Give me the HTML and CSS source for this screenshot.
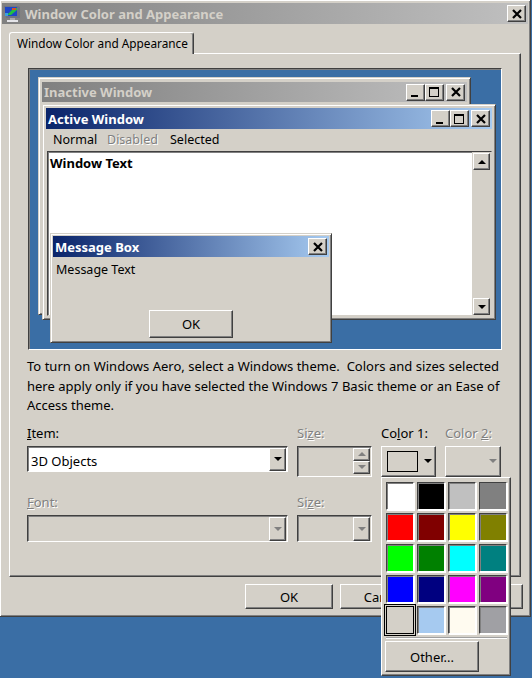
FILE: index.html
```html
<!DOCTYPE html>
<html lang="en">

<head>
    <meta charset="UTF-8">
    <meta name="viewport" content="width=device-width, initial-scale=1.0">
    <title>Window Color and Appearance</title>
    <link rel="stylesheet" href="styles.css">
</head>

<body>
    <div class="dialog">
        <div class="dialog-title">
            <svg class="app-icon" width="16" height="18" viewBox="0 0 16 18">
                <path d="M0 1l14 0 2 1 0 11-14 0z" fill="#6f7484" />
                <path d="M1 2h12v9H1z" fill="#1d46c8" />
                <path d="M3 10l7-7 3 0 0 2-6 5z" fill="#22c040" />
                <path d="M8 3h4v2H8z" fill="#d0502c" />
                <path d="M1 8h3v3H1z" fill="#3aa0e0" />
                <path d="M6 13h5v2H6z" fill="#a8a8ac" />
                <path d="M3 15h11v2H3z" fill="#e4e4e8" />
            </svg>
            <span class="dialog-title-text">Window Color and Appearance</span>
            <button class="cap-btn dialog-close"><svg width="10" height="10" viewBox="0 0 10 10"><path class="x-mark" d="M1 1l8 8M9 1L1 9" /></svg></button>
        </div>

        <div class="tab">Window Color and Appearance</div>

        <div class="panel">
            <div class="preview">
                <div class="window inactive-window">
                    <div class="caption caption-inactive">
                        <span>Inactive Window</span>
                        <div class="cap-btns">
                            <button class="cap-btn"><i class="glyph-min"></i></button>
                            <button class="cap-btn"><i class="glyph-max"></i></button>
                            <button class="cap-btn cap-close"><svg width="10" height="10" viewBox="0 0 10 10"><path class="x-mark" d="M1 1l8 8M9 1L1 9" /></svg></button>
                        </div>
                    </div>
                </div>

                <div class="window active-window">
                    <div class="caption caption-active">
                        <span>Active Window</span>
                        <div class="cap-btns">
                            <button class="cap-btn"><i class="glyph-min"></i></button>
                            <button class="cap-btn"><i class="glyph-max"></i></button>
                            <button class="cap-btn cap-close"><svg width="10" height="10" viewBox="0 0 10 10"><path class="x-mark" d="M1 1l8 8M9 1L1 9" /></svg></button>
                        </div>
                    </div>
                    <div class="menu">
                        <span>Normal</span>
                        <span class="disabled">Disabled</span>
                        <span>Selected</span>
                    </div>
                    <div class="client">
                        <div class="window-text">Window Text</div>
                        <div class="scrollbar">
                            <button class="scroll-btn"><i class="arrow-up"></i></button>
                            <button class="scroll-btn"><i class="arrow-down"></i></button>
                        </div>
                    </div>
                </div>

                <div class="window message-box">
                    <div class="caption caption-active caption-msg">
                        <span>Message Box</span>
                        <button class="cap-btn"><svg width="10" height="10" viewBox="0 0 10 10"><path class="x-mark" d="M1 1l8 8M9 1L1 9" /></svg></button>
                    </div>
                    <div class="message-text">Message Text</div>
                    <div class="message-actions">
                        <button class="btn msg-ok">OK</button>
                    </div>
                </div>
            </div>

            <p class="note">To turn on Windows Aero, select a Windows theme.&nbsp; Colors and sizes selected<br>here apply only if you have selected the Windows 7 Basic theme or an Ease of<br>Access theme.</p>

            <div class="form">
                <label class="lbl"><u>I</u>tem:</label>
                <label class="lbl disabled">Si<u>z</u>e:</label>
                <label class="lbl">Co<u>l</u>or 1:</label>
                <label class="lbl disabled">Color <u>2</u>:</label>

                <div class="combo combo-white">
                    <span class="combo-value">3D Objects</span>
                    <button class="scroll-btn combo-btn"><i class="arrow-down"></i></button>
                </div>
                <div class="spinner">
                    <div class="spin-btns">
                        <button class="scroll-btn spin-btn"><i class="arrow-up off"></i></button>
                        <button class="scroll-btn spin-btn"><i class="arrow-down off"></i></button>
                    </div>
                </div>
                <button class="color-btn"><span class="color-chip"></span><i class="arrow-down"></i></button>
                <button class="color-btn color-btn-off"><i class="arrow-down off"></i></button>

                <label class="lbl disabled"><u>F</u>ont:</label>
                <label class="lbl disabled">Si<u>z</u>e:</label>
                <span></span>
                <span></span>

                <div class="combo combo-short">
                    <button class="scroll-btn combo-btn"><i class="arrow-down off"></i></button>
                </div>
                <div class="combo combo-short">
                    <button class="scroll-btn combo-btn"><i class="arrow-down off"></i></button>
                </div>
            </div>
        </div>

        <div class="dialog-actions">
            <button class="btn">OK</button>
            <button class="btn">Cancel</button>
            <button class="btn">Apply</button>
        </div>
    </div>

    <div class="color-popup">
        <div class="swatches">
            <span class="swatch c-white"></span>
            <span class="swatch c-black"></span>
            <span class="swatch c-silver"></span>
            <span class="swatch c-gray"></span>
            <span class="swatch c-red"></span>
            <span class="swatch c-maroon"></span>
            <span class="swatch c-yellow"></span>
            <span class="swatch c-olive"></span>
            <span class="swatch c-lime"></span>
            <span class="swatch c-green"></span>
            <span class="swatch c-aqua"></span>
            <span class="swatch c-teal"></span>
            <span class="swatch c-blue"></span>
            <span class="swatch c-navy"></span>
            <span class="swatch c-fuchsia"></span>
            <span class="swatch c-purple"></span>
            <span class="swatch c-face selected"></span>
            <span class="swatch c-sky"></span>
            <span class="swatch c-cream"></span>
            <span class="swatch c-medium"></span>
        </div>
        <div class="popup-sep"></div>
        <button class="btn other-btn">Other...</button>
    </div>
</body>

</html>
```

FILE: styles.css
```css
* {
    margin: 0;
    padding: 0;
    box-sizing: border-box;
}

html,
body {
    height: 100%;
}

body {
    position: relative;
    overflow: hidden;
    background-color: #3a6ea5;
    font-family: "Noto Sans", sans-serif;
    font-size: 13px;
    color: #000;
}

button {
    font: inherit;
    color: inherit;
    background-color: #d4d0c8;
    display: flex;
    align-items: center;
    justify-content: center;
}

i {
    display: block;
}

.disabled {
    color: #808080;
    text-shadow: 1px 1px 0 #fff;
}

.x-mark {
    fill: none;
    stroke: #000;
    stroke-width: 2.200;
}

/* outer dialog */
.dialog {
    width: 531px;
    height: 617px;
    padding: 3px 2px 0 1px;
    background-color: #d4d0c8;
    border-right: 1px solid #404040;
    border-bottom: 1px solid #404040;
    box-shadow: inset 1px 1px 0 #fff, inset -1px -1px 0 #808080;
}

.dialog-title {
    display: flex;
    align-items: center;
    height: 21px;
    margin-left: 1px;
    padding: 0 2px 0 2px;
    background: linear-gradient(to right, #808080, #c0c0c0);
    color: #d4d0c8;
    font-weight: bold;
}

.app-icon {
    flex: none;
    margin-right: 5px;
}

.dialog-title-text {
    flex: 1;
}

.dialog-close {
    width: 19px;
    height: 17px;
}

.tab {
    width: 185px;
    height: 22px;
    margin: 8px 0 -1px 8px;
    padding: 2px 0 0 7px;
    position: relative;
    z-index: 1;
    white-space: nowrap;
    font-size: 11.800px;
    background-color: #d4d0c8;
    border-top: 1px solid #fff;
    border-left: 1px solid #fff;
    border-right: 1px solid #404040;
    border-top-left-radius: 3px;
    border-top-right-radius: 3px;
    box-shadow: inset -1px 0 0 #808080;
}

.panel {
    width: 512px;
    height: 524px;
    margin-left: 8px;
    padding: 14px 0 0 17px;
    border: 1px solid;
    border-color: #fff #404040 #404040 #fff;
    box-shadow: inset -1px -1px 0 #808080;
}

/* the little desktop with sample windows */
.preview {
    position: relative;
    width: 474px;
    height: 282px;
    margin-left: 1px;
    background-color: #3a6ea5;
    border: 1px solid;
    border-color: #404040 #fff #fff #404040;
    box-shadow: inset 1px 1px 0 #808080;
}

.window {
    position: absolute;
    display: flex;
    flex-direction: column;
    background-color: #d4d0c8;
    border: 1px solid;
    border-color: #d4d0c8 #404040 #404040 #d4d0c8;
    box-shadow: inset 1px 1px 0 #fff, inset -1px -1px 0 #808080;
}

.inactive-window {
    left: 9px;
    top: 8px;
    width: 433px;
    height: 238px;
    padding: 4px 3px 0 3px;
}

.active-window {
    left: 13px;
    top: 35px;
    width: 454px;
    height: 216px;
    padding: 3px 3px 0 3px;
}

.message-box {
    left: 21px;
    top: 164px;
    width: 282px;
    height: 110px;
    padding: 2px 2px 0 2px;
}

.caption {
    display: flex;
    align-items: center;
    justify-content: space-between;
    height: 20px;
    padding: 0 2px 0 2px;
    font-weight: bold;
    flex: none;
}

.caption-inactive {
    color: #d4d0c8;
    background: linear-gradient(to right, #808080, #c0c0c0);
}

.caption-active {
    height: 21px;
    color: #fff;
    background: linear-gradient(to right, #0a246a, #a6caf0);
}

.cap-btns {
    display: flex;
}

.cap-btn {
    width: 19px;
    height: 17px;
    border: 1px solid;
    border-color: #fff #404040 #404040 #fff;
    box-shadow: inset -1px -1px 0 #808080;
}

.cap-close {
    margin-left: 2px;
}

.glyph-min {
    width: 7px;
    height: 2px;
    margin-top: 8px;
    margin-right: 2px;
    background-color: #000;
}

.glyph-max {
    width: 10px;
    height: 10px;
    margin-right: 1px;
    border: 1px solid #000;
    border-top-width: 2px;
}

.menu {
    display: grid;
    grid-template-columns: 54px 63px auto;
    height: 22px;
    align-items: center;
    padding: 0 0 1px 7px;
    font-size: 12.500px;
    flex: none;
}

.client {
    display: flex;
    justify-content: space-between;
    width: 445px;
    height: 165px;
    margin-left: 1px;
    background-color: #fff;
    border: 1px solid;
    border-color: #404040 #d4d0c8 #d4d0c8 #404040;
    box-shadow: inset 1px 1px 0 #808080;
}

.window-text {
    padding: 2px 0 0 2px;
    font-weight: bold;
}

.scrollbar {
    display: flex;
    flex-direction: column;
    justify-content: space-between;
    width: 19px;
    padding: 1px 1px 0 1px;
    background-color: #d4d0c8;
}

.scroll-btn {
    width: 17px;
    height: 17px;
    border: 1px solid;
    border-color: #fff #404040 #404040 #fff;
    box-shadow: inset -1px -1px 0 #808080;
}

.arrow-up,
.arrow-down {
    width: 0;
    height: 0;
    border-left: 4px solid transparent;
    border-right: 4px solid transparent;
}

.arrow-up {
    border-bottom: 4px solid #000;
}

.arrow-down {
    border-top: 4px solid #000;
}

.arrow-up.off {
    border-bottom-color: #808080;
}

.arrow-down.off {
    border-top-color: #808080;
}

.message-text {
    height: 53px;
    padding: 4px 0 0 3px;
    font-size: 12.500px;
}

.message-actions {
    padding-left: 96px;
}

.btn {
    width: 88px;
    height: 25px;
    border: 1px solid;
    border-color: #fff #404040 #404040 #fff;
    box-shadow: inset -1px -1px 0 #808080;
}

.msg-ok {
    width: 84px;
    height: 28px;
}

/* text and fields under the preview */
.note {
    margin-top: 7px;
    line-height: 19.500px;
    white-space: nowrap;
    word-spacing: 0.100px;
}

.form {
    display: grid;
    grid-template-columns: 261px 75px 55px 56px;
    grid-template-rows: 26px 31px 38px 27px;
    column-gap: 9px;
    margin-top: 4px;
}

.lbl {
    align-self: end;
    padding-bottom: 4px;
    line-height: 18px;
}

.combo,
.spinner {
    display: flex;
    justify-content: flex-end;
    align-items: flex-start;
    height: 26px;
    padding: 1px 1px 0 0;
    border: 1px solid;
    border-color: #404040 #fff #fff #404040;
    box-shadow: inset 1px 1px 0 #808080;
}

.combo-white {
    background-color: #fff;
}

.combo-value {
    flex: 1;
    padding: 4px 0 0 3px;
}

.combo-btn {
    height: 23px;
}

.combo-short .combo-btn {
    height: 24px;
}

.combo-short {
    height: 27px;
}

.spinner {
    height: 31px;
}

.spin-btns {
    display: flex;
    flex-direction: column;
}

.spin-btn {
    height: 13px;
}

.color-btn {
    justify-content: flex-start;
    height: 31px;
    padding-left: 5px;
    gap: 6px;
    border: 1px solid;
    border-color: #fff #404040 #404040 #fff;
    box-shadow: inset -1px -1px 0 #808080;
}

.color-chip {
    width: 31px;
    height: 21px;
    background-color: #d4d0c8;
    border: 1px solid #000;
}

.color-btn-off {
    justify-content: flex-end;
    padding: 0 3px 0 0;
}

.dialog-actions {
    display: flex;
    gap: 7px;
    margin: 7px 0 0 244px;
}

/* dropdown from the Color 1 button */
.color-popup {
    position: absolute;
    left: 381px;
    top: 477px;
    width: 130px;
    height: 199px;
    padding: 4px 3px 0 3px;
    background-color: #d4d0c8;
    border: 1px solid;
    border-color: #fff #404040 #404040 #fff;
    box-shadow: inset -1px -1px 0 #808080;
}

.swatches {
    display: grid;
    grid-template-columns: repeat(4, 28px);
    grid-auto-rows: 28px;
    gap: 3px;
    margin-left: 1px;
}

.swatch {
    border: 1px solid;
    border-color: #404040 #fff #fff #404040;
    box-shadow: inset 1px 1px 0 #808080, 1px 1px 0 #fff;
}

.swatch.selected {
    outline: 1px solid #000;
    outline-offset: 1px;
    border-color: #000;
    box-shadow: none;
}

.c-white { background-color: #fff; }
.c-black { background-color: #000; }
.c-silver { background-color: #c0c0c0; }
.c-gray { background-color: #808080; }
.c-red { background-color: #f00; }
.c-maroon { background-color: #800000; }
.c-yellow { background-color: #ff0; }
.c-olive { background-color: #808000; }
.c-lime { background-color: #0f0; }
.c-green { background-color: #008000; }
.c-aqua { background-color: #0ff; }
.c-teal { background-color: #008080; }
.c-blue { background-color: #00f; }
.c-navy { background-color: #000080; }
.c-fuchsia { background-color: #f0f; }
.c-purple { background-color: #800080; }
.c-face { background-color: #d4d0c8; }
.c-sky { background-color: #a6caf0; }
.c-cream { background-color: #fffbf0; }
.c-medium { background-color: #a0a0a4; }

.popup-sep {
    height: 2px;
    margin: 3px 0 2px 1px;
    background-color: #fff;
    border-top: 1px solid #a0a0a0;
}

.other-btn {
    width: 94px;
    height: 31px;
}
```
